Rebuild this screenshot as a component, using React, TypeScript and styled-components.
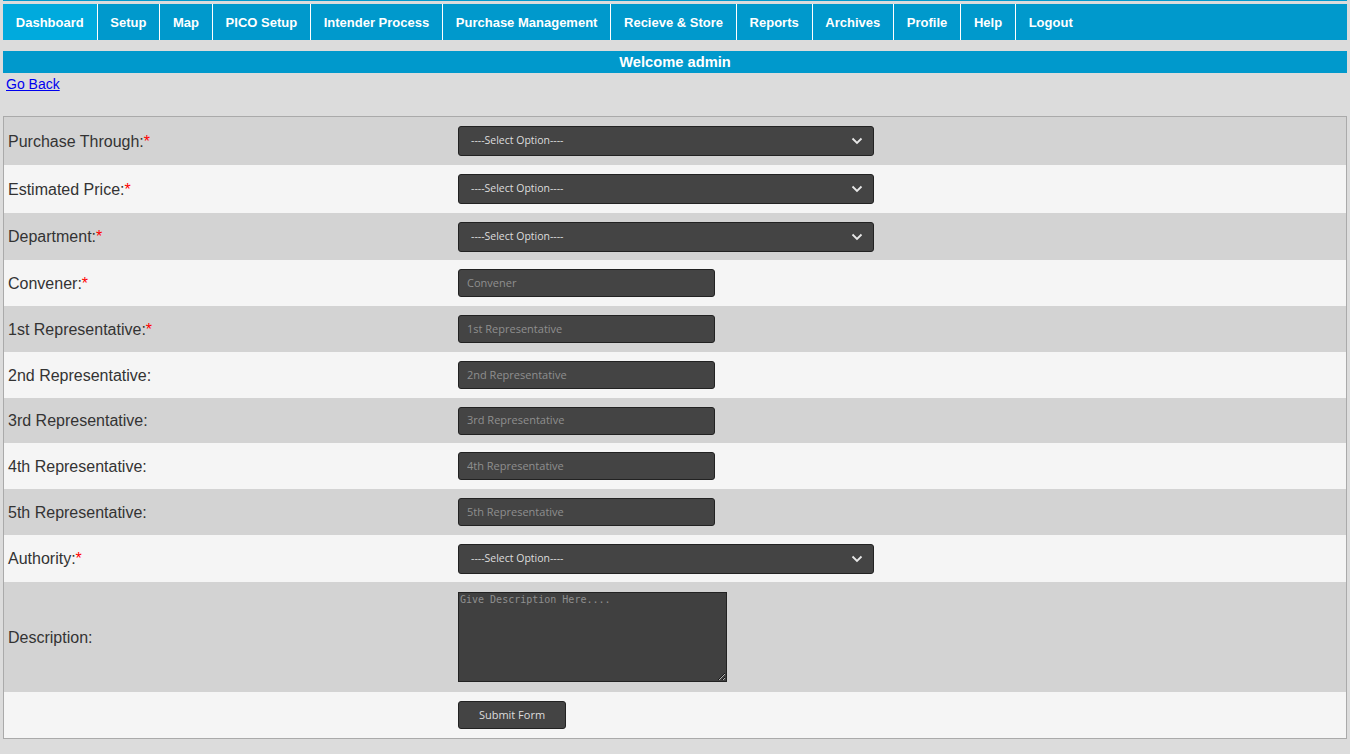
import React from "react";
import styled, { createGlobalStyle } from "styled-components";

const Global = createGlobalStyle`
  html, body { margin: 0; padding: 0; background: #dcdcdc; }
  body { font-family: "Liberation Sans", Arial, sans-serif; }
  * { box-sizing: border-box; }
`;

const Page = styled.div`
  padding: 0 3px;
  display: flex;
  flex-direction: column;
`;

const TopLine = styled.div`
  height: 1px;
  background: #0099cc;
  margin-bottom: 3px;
`;

const Nav = styled.nav`
  display: flex;
  height: 36px;
  background: #0099cc;
`;

const NavItem = styled.a<{ $active?: boolean }>`
  display: flex;
  align-items: center;
  padding: 0 12.8px;
  color: #fff;
  font-weight: bold;
  font-size: 13px;
  text-decoration: none;
  background: ${(p) => (p.$active ? "#00aadd" : "transparent")};
  border-right: 1px solid #ffffff;
  &:last-child { border-right: none; }
`;

const Welcome = styled.div`
  margin-top: 11px;
  height: 22px;
  background: #0099cc;
  color: #fff;
  font-weight: bold;
  font-size: 14.7px;
  display: flex;
  align-items: center;
  justify-content: center;
`;

const BackLink = styled.a`
  margin-left: 3px;
  font-size: 14px;
  line-height: 22px;
  color: #0000ee;
  text-decoration: underline;
  align-self: flex-start;
`;

const FormBox = styled.form`
  margin-top: 21px;
  border: 1px solid #aaaaaa;
  display: grid;
  grid-template-columns: 454px 1fr;
`;

const Row = styled.div<{ $alt: boolean; $pad: number }>`
  display: contents;
  & > * {
    background: ${(p) => (p.$alt ? "#f5f5f5" : "#d3d3d3")};
    padding-top: ${(p) => p.$pad}px;
    padding-bottom: ${(p) => p.$pad}px;
  }
`;

const Label = styled.div`
  display: flex;
  align-items: center;
  padding-left: 4px;
  font-size: 16px;
  line-height: 20px;
  color: #333;
`;

const LabelText = styled.span`
  position: relative;
  top: 0.5px;
`;

const Req = styled.span`
  color: #ff0000;
`;

const Field = styled.div`
  display: flex;
  align-items: center;
`;

const SelectWrap = styled.div`
  position: relative;
  width: 416px;
  height: 30px;
`;

const Select = styled.select`
  appearance: none;
  -webkit-appearance: none;
  width: 100%;
  height: 100%;
  background: #444444;
  border: 1px solid #222;
  border-radius: 3px;
  color: #dddddd;
  font-family: "Open Sans", "Noto Sans", sans-serif;
  font-size: 10.5px;
  padding: 0 0 2px 12px;
  outline: none;
`;

const Chevron = styled.svg`
  position: absolute;
  right: 11px;
  top: 11px;
  pointer-events: none;
`;

const TextInput = styled.input`
  width: 257px;
  height: 28px;
  background: #444444;
  border: 1px solid #222;
  border-radius: 3px;
  color: #ddd;
  font-family: "Open Sans", "Noto Sans", sans-serif;
  font-size: 11px;
  padding: 0 8px 2px 8px;
  outline: none;
  &::placeholder { color: #8f8f8f; }
`;

const TextArea = styled.textarea`
  width: 269px;
  height: 90px;
  background: #404040;
  border: 1px solid #222;
  color: #ddd;
  font-family: "DejaVu Sans Mono", monospace;
  font-size: 10px;
  padding: 1px 1px;
  margin: 0;
  outline: none;
  &::placeholder { color: #8f8f8f; }
`;

const Submit = styled.button`
  width: 108px;
  height: 28px;
  background: #444444;
  border: 1px solid #222;
  border-radius: 3px;
  color: #dddddd;
  font-family: "Open Sans", "Noto Sans", sans-serif;
  font-size: 11px;
  padding: 0 0 2px 0;
  cursor: pointer;
`;

const navItems = [
  "Dashboard",
  "Setup",
  "Map",
  "PICO Setup",
  "Intender Process",
  "Purchase Management",
  "Recieve & Store",
  "Reports",
  "Archives",
  "Profile",
  "Help",
  "Logout",
];

type FieldDef = {
  label: string;
  req?: boolean;
  kind: "select" | "input" | "textarea" | "submit" | "";
  ph?: string;
  pad: number;
};

const fields: FieldDef[] = [
  { label: "Purchase Through:", req: true, kind: "select", pad: 9 },
  { label: "Estimated Price:", req: true, kind: "select", pad: 9 },
  { label: "Department:", req: true, kind: "select", pad: 8.5 },
  { label: "Convener:", req: true, kind: "input", ph: "Convener", pad: 9 },
  { label: "1st Representative:", req: true, kind: "input", ph: "1st Representative", pad: 9 },
  { label: "2nd Representative:", kind: "input", ph: "2nd Representative", pad: 9 },
  { label: "3rd Representative:", kind: "input", ph: "3rd Representative", pad: 8.5 },
  { label: "4th Representative:", kind: "input", ph: "4th Representative", pad: 9 },
  { label: "5th Representative:", kind: "input", ph: "5th Representative", pad: 9 },
  { label: "Authority:", req: true, kind: "select", pad: 8.5 },
  { label: "Description:", kind: "textarea", pad: 10 },
  { label: "", kind: "submit", pad: 9 },
];

function renderField(f: FieldDef) {
  switch (f.kind) {
    case "select":
      return (
        <SelectWrap>
          <Select defaultValue="">
            <option value="">----Select Option----</option>
          </Select>
          <Chevron width="12" height="8" viewBox="0 0 12 8">
            <path d="M1.5 1.5 L6 6 L10.5 1.5" fill="none" stroke="#e8e8e8" strokeWidth="1.8" />
          </Chevron>
        </SelectWrap>
      );
    case "input":
      return <TextInput placeholder={f.ph} />;
    case "textarea":
      return <TextArea placeholder="Give Description Here...." />;
    case "submit":
      return <Submit type="button">Submit Form</Submit>;
    default:
      return null;
  }
}

export default function App() {
  return (
    <>
      <Global />
      <Page>
        <TopLine />
        <Nav>
          {navItems.map((n, i) => (
            <NavItem key={n} href="#" $active={i === 0}>
              {n}
            </NavItem>
          ))}
        </Nav>
        <Welcome>Welcome admin</Welcome>
        <BackLink href="#">Go Back</BackLink>
        <FormBox onSubmit={(e) => e.preventDefault()}>
          {fields.map((f, i) => (
            <Row key={i} $alt={i % 2 === 1} $pad={f.pad}>
              <Label>
                <LabelText>
                  {f.label}
                  {f.req && <Req>*</Req>}
                </LabelText>
              </Label>
              <Field>{renderField(f)}</Field>
            </Row>
          ))}
        </FormBox>
      </Page>
    </>
  );
}
